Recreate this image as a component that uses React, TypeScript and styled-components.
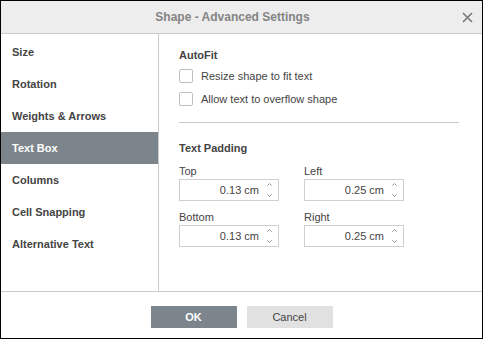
import React from "react";
import styled, { createGlobalStyle } from "styled-components";

const Global = createGlobalStyle`
  html, body { margin: 0; padding: 0; background: #fff; }
  body { font-family: "Liberation Sans", Arial, sans-serif; font-size: 11px; color: #444; }
  * { box-sizing: border-box; }
`;

const Window = styled.div`
  width: 483px;
  height: 339px;
  border: 1px solid #000;
  background: #fff;
  display: flex;
  flex-direction: column;
`;

const Header = styled.div`
  height: 33px;
  flex: none;
  background: #ededed;
  border-bottom: 1px solid #cbcbcb;
  display: flex;
  align-items: center;
  position: relative;
  padding-right: 18px;
`;

const Title = styled.div`
  flex: 1;
  text-align: center;
  font-size: 12px;
  font-weight: bold;
  color: #848484;
  line-height: 14px;
`;

const Close = styled.button`
  position: absolute;
  right: 9px;
  top: 10px;
  width: 12px;
  height: 12px;
  padding: 0;
  border: 0;
  background: transparent;
  display: flex;
  align-items: center;
  justify-content: center;
`;

const Body = styled.div`
  flex: 1;
  display: flex;
  border-bottom: 1px solid #cbcbcb;
`;

const Sidebar = styled.div`
  width: 158px;
  flex: none;
  border-right: 1px solid #cbcbcb;
  padding-top: 2px;
  display: flex;
  flex-direction: column;
`;

const NavItem = styled.div<{ $active?: boolean }>`
  height: 32px;
  display: flex;
  align-items: center;
  padding-left: 11px;
  font-weight: bold;
  font-size: 11px;
  color: ${(p) => (p.$active ? "#fff" : "#444")};
  background: ${(p) => (p.$active ? "#7d858c" : "transparent")};
`;

const Content = styled.div`
  flex: 1;
  padding: 14px 20px 0 20px;
  display: flex;
  flex-direction: column;
`;

const SectionTitle = styled.div<{ $mt?: number }>`
  font-weight: bold;
  line-height: 14px;
  margin-top: ${(p) => p.$mt ?? 0}px;
`;

const CheckList = styled.div`
  margin-top: 7px;
  display: flex;
  flex-direction: column;
  gap: 9px;
`;

const CheckRow = styled.label`
  display: flex;
  align-items: center;
  gap: 8px;
  height: 14px;
  line-height: 14px;
`;

const Box = styled.span`
  width: 14px;
  height: 14px;
  border: 1px solid #c0c0c0;
  border-radius: 2px;
  background: #fff;
  flex: none;
`;

const Separator = styled.div`
  margin-top: 16px;
  width: 280px;
  height: 1px;
  background: #cbcbcb;
`;

const Grid = styled.div`
  margin-top: 9px;
  display: grid;
  grid-template-columns: 100px 100px;
  column-gap: 25px;
  row-gap: 9px;
`;

const Field = styled.div`
  display: flex;
  flex-direction: column;
  gap: 1px;
`;

const Label = styled.div`
  line-height: 14px;
`;

const Spin = styled.div`
  height: 22px;
  border: 1px solid #cfcfcf;
  background: #fff;
  display: flex;
  align-items: center;
`;

const Value = styled.div`
  flex: 1;
  text-align: right;
  padding-right: 4px;
  line-height: 14px;
  color: #444;
`;

const Arrows = styled.div`
  width: 12px;
  height: 20px;
  display: flex;
  flex-direction: column;
  align-items: center;
  justify-content: center;
  gap: 8px;
  margin-right: 3px;
`;

const Footer = styled.div`
  height: 46px;
  flex: none;
  display: flex;
  justify-content: center;
  align-items: flex-start;
  padding-top: 14px;
  gap: 10px;
`;

const Button = styled.button<{ $primary?: boolean }>`
  width: 86px;
  height: 22px;
  border: 0;
  padding: 0;
  font-family: "Liberation Sans", Arial, sans-serif;
  font-size: 11px;
  font-weight: ${(p) => (p.$primary ? "bold" : "normal")};
  color: ${(p) => (p.$primary ? "#fff" : "#444")};
  background: ${(p) => (p.$primary ? "#7d858c" : "#e1e1e1")};
`;

const Up = () => (
  <svg width="5" height="3" viewBox="0 0 5 3" style={{ display: "block" }}>
    <path d="M0.3 2.7 L2.5 0.5 L4.7 2.7" fill="none" stroke="#8a8a8a" strokeWidth="0.9" />
  </svg>
);
const Down = () => (
  <svg width="5" height="3" viewBox="0 0 5 3" style={{ display: "block" }}>
    <path d="M0.3 0.3 L2.5 2.5 L4.7 0.3" fill="none" stroke="#8a8a8a" strokeWidth="0.9" />
  </svg>
);

const SpinInput = ({ value }: { value: string }) => (
  <Spin>
    <Value>{value}</Value>
    <Arrows>
      <Up />
      <Down />
    </Arrows>
  </Spin>
);

const nav = [
  "Size",
  "Rotation",
  "Weights & Arrows",
  "Text Box",
  "Columns",
  "Cell Snapping",
  "Alternative Text",
];

export default function App() {
  return (
    <>
      <Global />
      <Window>
        <Header>
          <Title>Shape - Advanced Settings</Title>
          <Close aria-label="Close">
            <svg width="11" height="11" viewBox="0 0 11 11">
              <path d="M1 1 L10 10 M10 1 L1 10" stroke="#777" strokeWidth="1.6" />
            </svg>
          </Close>
        </Header>
        <Body>
          <Sidebar>
            {nav.map((n) => (
              <NavItem key={n} $active={n === "Text Box"}>
                {n}
              </NavItem>
            ))}
          </Sidebar>
          <Content>
            <SectionTitle>AutoFit</SectionTitle>
            <CheckList>
              <CheckRow>
                <Box />
                Resize shape to fit text
              </CheckRow>
              <CheckRow>
                <Box />
                Allow text to overflow shape
              </CheckRow>
            </CheckList>
            <Separator />
            <SectionTitle $mt={18}>Text Padding</SectionTitle>
            <Grid>
              <Field>
                <Label>Top</Label>
                <SpinInput value="0.13 cm" />
              </Field>
              <Field>
                <Label>Left</Label>
                <SpinInput value="0.25 cm" />
              </Field>
              <Field>
                <Label>Bottom</Label>
                <SpinInput value="0.13 cm" />
              </Field>
              <Field>
                <Label>Right</Label>
                <SpinInput value="0.25 cm" />
              </Field>
            </Grid>
          </Content>
        </Body>
        <Footer>
          <Button $primary>OK</Button>
          <Button>Cancel</Button>
        </Footer>
      </Window>
    </>
  );
}
